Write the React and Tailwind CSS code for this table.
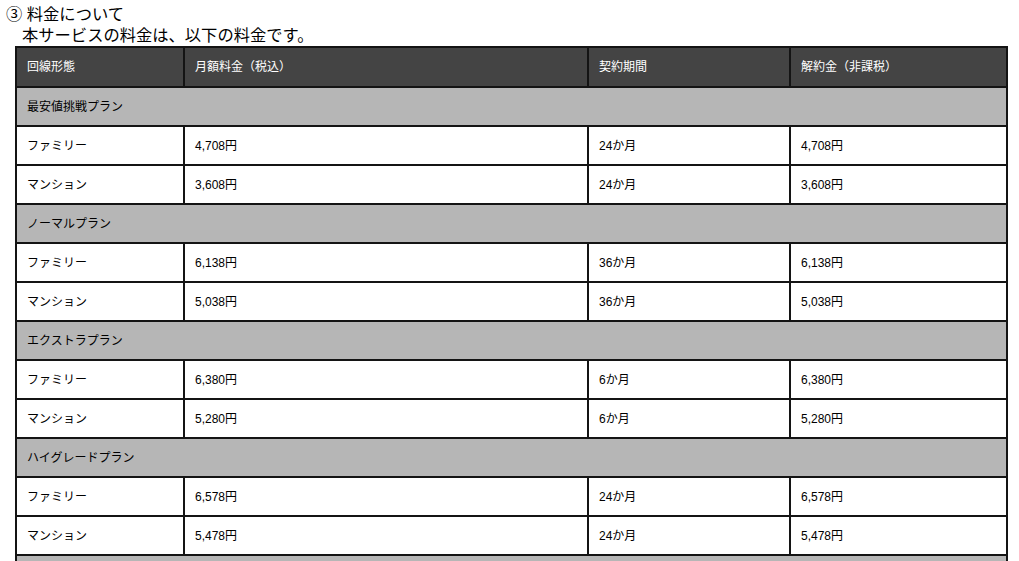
import React from "react";

const plans = [
  {
    name: "最安値挑戦プラン",
    rows: [
      ["ファミリー", "4,708円", "24か月", "4,708円"],
      ["マンション", "3,608円", "24か月", "3,608円"],
    ],
  },
  {
    name: "ノーマルプラン",
    rows: [
      ["ファミリー", "6,138円", "36か月", "6,138円"],
      ["マンション", "5,038円", "36か月", "5,038円"],
    ],
  },
  {
    name: "エクストラプラン",
    rows: [
      ["ファミリー", "6,380円", "6か月", "6,380円"],
      ["マンション", "5,280円", "6か月", "5,280円"],
    ],
  },
  {
    name: "ハイグレードプラン",
    rows: [
      ["ファミリー", "6,578円", "24か月", "6,578円"],
      ["マンション", "5,478円", "24か月", "5,478円"],
    ],
  },
];

const cell = "border-2 border-[#141414] px-[10px] h-[39px] align-middle text-left font-normal";

export default function App() {
  return (
    <div className="w-[1019px] h-[561px] overflow-hidden bg-white text-black font-['Liberation_Sans','Noto_Sans_CJK_JP',sans-serif]">
      <div className="pt-[4px] text-[16.3px] leading-[21px]">
        <p className="pl-[6px]">③ 料金について</p>
        <p className="pl-[22px]">本サービスの料金は、以下の料金です。</p>
      </div>
      <table className="ml-[15px] w-[991px] table-fixed border-collapse text-[12px]">
        <colgroup>
          <col className="w-[168px]" />
          <col className="w-[404px]" />
          <col className="w-[202px]" />
          <col className="w-[217px]" />
        </colgroup>
        <thead>
          <tr className="bg-[#444444] text-white">
            <th className={`${cell} h-[40px]`}>回線形態</th>
            <th className={cell}>月額料金（税込）</th>
            <th className={cell}>契約期間</th>
            <th className={cell}>解約金（非課税）</th>
          </tr>
        </thead>
        <tbody>
          {plans.map((plan) => (
            <React.Fragment key={plan.name}>
              <tr className="bg-[#b6b6b6]">
                <td colSpan={4} className={cell}>
                  {plan.name}
                </td>
              </tr>
              {plan.rows.map((r, i) => (
                <tr key={i}>
                  {r.map((v, j) => (
                    <td key={j} className={cell}>
                      {v}
                    </td>
                  ))}
                </tr>
              ))}
            </React.Fragment>
          ))}
          {/* next plan group, cut off by the viewport */}
          <tr className="bg-[#b6b6b6]">
            <td colSpan={4} className={cell}></td>
          </tr>
        </tbody>
      </table>
    </div>
  );
}
